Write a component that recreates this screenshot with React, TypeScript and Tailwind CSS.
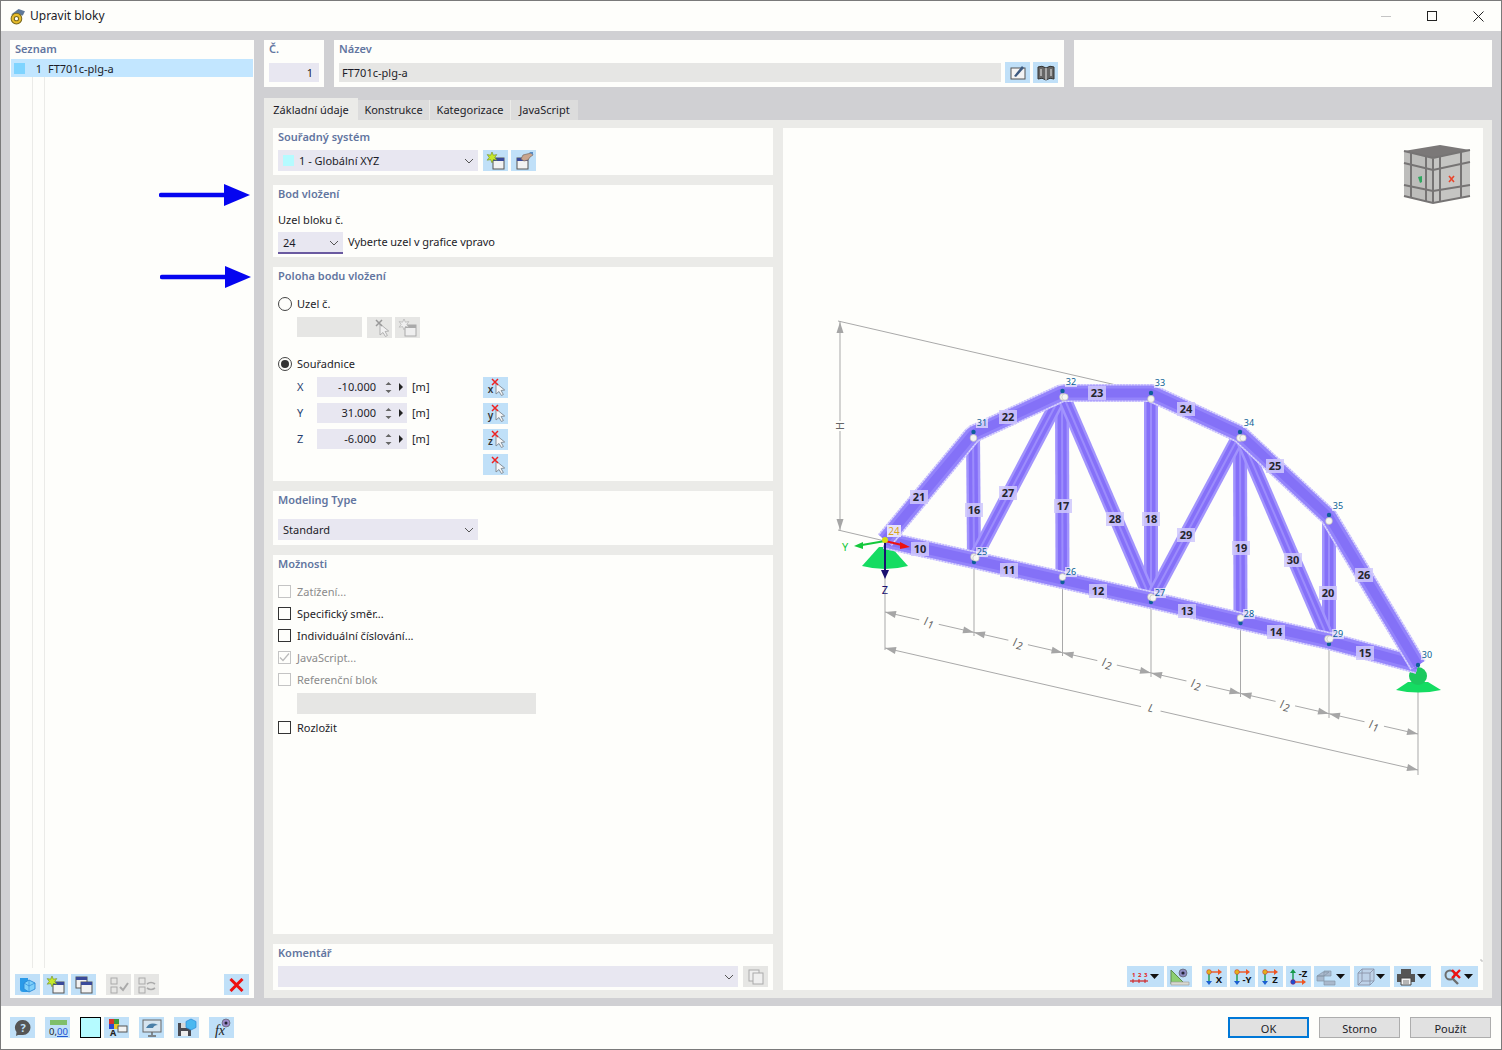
import React from "react";

const FONT = "font-['Noto_Sans','Open_Sans',sans-serif]";

function Sec({ title, className, children }: { title: string; className: string; children?: React.ReactNode }) {
  return (
    <div className={`bg-[#fefefb] pl-[5px] flex flex-col ${className}`}>
      <div className="h-[19px] leading-[17px] text-[#6275a0] font-semibold">{title}</div>
      {children}
    </div>
  );
}

function Btn({ children, off, className = "" }: { children?: React.ReactNode; off?: boolean; className?: string }) {
  return (
    <div className={`w-[25px] h-[21px] shrink-0 flex items-center justify-center ${off ? "bg-[#e6e6e4]" : "bg-[#c0e0f8]"} ${className}`}>
      {children}
    </div>
  );
}

function Ic({ children, w = 22, h = 20 }: { children: React.ReactNode; w?: number; h?: number }) {
  return (
    <svg width={w} height={h} viewBox={`0 0 ${w} ${h}`}>
      {children}
    </svg>
  );
}

const Win = ({ x = 8, y = 7, off = false }: { x?: number; y?: number; off?: boolean }) => (
  <g>
    <rect x={x} y={y} width="11" height="11" fill={off ? "#efefef" : "#f2f2f2"} stroke={off ? "#aaa" : "#555"} />
    <rect x={x} y={y} width="11" height="3" fill={off ? "#aaa" : "#3a4a9a"} />
  </g>
);

const Star = ({ off = false }: { off?: boolean }) => (
  <path d="M7 1l1.4 3.2 3.4-.6-2 2.8 2 2.8-3.4-.6L7 11.8 5.6 8.6l-3.4.6 2-2.8-2-2.8 3.4.6z" fill={off ? "#efefef" : "#c6e82a"} stroke={off ? "#aaa" : "#6d8a1c"} strokeWidth="0.6" />
);

const NewWin = ({ off }: { off?: boolean }) => (
  <Ic>
    <Win off={off} />
    <Star off={off} />
  </Ic>
);

const HandWin = () => (
  <Ic>
    <Win x={4} y={7} />
    <path d="M8 8l2-4 4-1 5-1 1 2-3 2-2 3-4 1z" fill="#c9a58e" stroke="#7b6a62" strokeWidth="0.7" />
    <path d="M16 1l4 0 0 3z" fill="#5a8ac0" />
  </Ic>
);

const Pick = ({ letter, off }: { letter?: string; off?: boolean }) => (
  <Ic>
    <path d="M11 6l0 11 3-2.5 2.4 4 2-1-2.3-4 3.6-.5z" fill={off ? "#f1f1f1" : "#f4f6f8"} stroke={off ? "#aaa" : "#7d8790"} strokeWidth="0.9" />
    <path d="M7 2l6 6M13 2l-6 6" stroke={off ? "#999" : "#ee2222"} strokeWidth="1.5" />
    {letter && (
      <text x="5.5" y="16" fontSize="10" fontWeight="600" textAnchor="middle" fill="#333">
        {letter}
      </text>
    )}
  </Ic>
);

const Chev = () => (
  <svg width="10" height="6" viewBox="0 0 10 6" className="shrink-0">
    <path d="M1 1l4 4 4-4" fill="none" stroke="#555" strokeWidth="1" />
  </svg>
);

const Drop = () => (
  <svg width="9" height="5" viewBox="0 0 9 5" className="shrink-0">
    <path d="M0 0h9L4.5 5z" fill="#111" />
  </svg>
);

function Check({ label, on, off }: { label: string; on?: boolean; off?: boolean }) {
  return (
    <div className={`h-[22px] flex items-center gap-[6px] ${off ? "text-[#8b8b8b]" : ""}`}>
      <div className={`w-[13px] h-[13px] bg-[#fefefb] border flex items-center justify-center ${off ? "border-[#c4c4c4]" : "border-[#333]"}`}>
        {on && (
          <svg width="11" height="11" viewBox="0 0 11 11">
            <path d="M1 5.5l3 3 6-7" fill="none" stroke="#bbb" strokeWidth="1.2" />
          </svg>
        )}
      </div>
      <span>{label}</span>
    </div>
  );
}

function Radio({ label, on }: { label: string; on?: boolean }) {
  return (
    <div className="h-[20px] flex items-center gap-[5px]">
      <div className="w-[14px] h-[14px] rounded-full border border-[#444] flex items-center justify-center">
        {on && <div className="w-[8px] h-[8px] rounded-full bg-[#333]" />}
      </div>
      <span className="pb-[2px]">{label}</span>
    </div>
  );
}

function CoordRow({ axis, value, letter }: { axis: string; value: string; letter: string }) {
  return (
    <div className="h-[26px] flex items-center">
      <span className="w-[39px] pl-[19px] pb-[2px] text-[#27406f]">{axis}</span>
      <div className="w-[90px] h-[20px] bg-[#e8e7f1] flex items-center justify-end pr-[4px]">
        <span className="mr-[9px] pb-[1px]">{value}</span>
        <svg width="7" height="13" viewBox="0 0 7 13" className="mr-[7px]">
          <path d="M3.5 1l3 3H.5zM3.5 12l3-3H.5z" fill="#666" />
        </svg>
        <svg width="4" height="8" viewBox="0 0 4 8">
          <path d="M0 0l4 4-4 4z" fill="#222" />
        </svg>
      </div>
      <span className="w-[76px] pl-[5px] pb-[2px]">[m]</span>
      <Btn>
        <Pick letter={letter} />
      </Btn>
    </div>
  );
}

const bottomChord = "885,540 974,560 1062.5,580 1151,600 1240.5,621 1329,641 1418,665";
const topChord = "885,540 973,434 1062,393 1151,393 1240,434 1329,517 1418,665";

const n = {
  n25: [974, 560], n26: [1062.5, 580], n27: [1151, 600], n28: [1240.5, 621], n29: [1329, 641],
  t31: [973, 434], t32: [1062, 393], t33: [1151, 393], t34: [1240, 434], t35: [1329, 517],
};

const webs: number[][][] = [
  [n.t31, n.n25], [n.t32, n.n26], [n.t33, n.n27], [n.t34, n.n28], [n.t35, n.n29],
  [n.n25, n.t32], [n.t32, n.n27], [n.n27, n.t34], [n.t34, n.n29],
];

const memberLabels: [string, number, number][] = [
  ["21", 919, 497], ["22", 1008, 417], ["23", 1097, 393], ["24", 1186, 409], ["25", 1275, 466], ["26", 1364, 575],
  ["27", 1008, 493], ["28", 1115, 519], ["29", 1186, 535], ["30", 1293, 560],
  ["16", 974, 510], ["17", 1063, 506], ["18", 1151, 519], ["19", 1241, 548], ["20", 1328, 593],
  ["10", 920, 549], ["11", 1009, 570], ["12", 1098, 591], ["13", 1187, 611], ["14", 1276, 632], ["15", 1365, 653],
];

const nodeLabels: [string, number, number][] = [
  ["25", 982, 552], ["26", 1071, 572], ["27", 1160, 593], ["28", 1249, 614], ["29", 1338, 634], ["30", 1427, 655],
  ["31", 982, 423], ["32", 1071, 382], ["33", 1160, 383], ["34", 1249, 423], ["35", 1338, 506],
];

const balls: [number, number, number, number][] = [
  [974, 557, 974, 562], [1062.5, 577, 1062.5, 582], [1151, 597, 1151, 602], [1240.5, 618, 1240.5, 623], [1328, 639, 1329, 644],
  [973.5, 438, 973.5, 432], [1063, 397, 1062.5, 391], [1151, 399, 1151, 393], [1240, 438, 1240, 432], [1329, 521, 1329, 515],
];

const extraBalls: [number, number][] = [[976, 558], [1065, 397], [1153, 598], [1243, 438], [1330, 639]];

const dims: [string, number, number][] = [
  ["L", 1151, 708], ["l1", 929, 622], ["l2", 1018, 643], ["l2", 1107, 663], ["l2", 1196, 684], ["l2", 1285, 705], ["l1", 1374, 725],
];

const dimTicks = [885, 974, 1062.5, 1151, 1240.5, 1329, 1418];

function Arrow({ x, y, a }: { x: number; y: number; a: number }) {
  return <path d="M0 0l-11 -3.5v7z" fill="#a6a6a6" transform={`translate(${x} ${y}) rotate(${a})`} />;
}

function Truss() {
  const grey = "#a9a9a9";
  return (
    <svg className="w-full h-full block" viewBox="783 128 700 862">
      {/* reference and dimension lines */}
      <g stroke={grey} fill="none" strokeWidth="1">
        <path d="M838 321L1151 393M838 530L885 541M840 321V531" />
        <path d="M885 541V650M974 562V636M1062.5 582V656M1151 602V677M1240.5 623V697M1329 644V718M1418 665V775" />
        <path d="M885 612L1418 734M885 648L1418 770" />
      </g>
      <Arrow x={840} y={322} a={-90} />
      <Arrow x={840} y={530} a={90} />
      <rect x="832" y="421" width="16" height="10" fill="#fefefb" />
      <text fontSize="11" textAnchor="middle" fill="#666" transform="translate(844 426) rotate(-90)">H</text>
      {dimTicks.slice(0, 6).map((x, i) => (
        <g key={x}>
          <Arrow x={x} y={612 + (x - 885) * 0.229} a={193} />
          <Arrow x={dimTicks[i + 1]} y={612 + (dimTicks[i + 1] - 885) * 0.229} a={13} />
        </g>
      ))}
      <Arrow x={885} y={648} a={193} />
      <Arrow x={1418} y={770} a={13} />
      {dims.map(([t, x, y], i) => (
        <g key={i} transform={`translate(${x} ${y}) rotate(13)`}>
          <rect x="-10" y="-6" width="20" height="12" fill="#fefefb" />
          <text y="4" fontSize="11" textAnchor="middle" fontStyle="italic" fill="#666">
            {t[0]}
            {t[1] && <tspan fontSize="10.5" dx="1" dy="2">{t[1]}</tspan>}
          </text>
        </g>
      ))}

      {/* supports behind the members */}
      <path d="M862 566L879 547H891L908 566Q885 572 862 566z" fill="#15dc62" />
      <path d="M1396 690L1408 682H1428L1441 690Q1418 695 1396 690z" fill="#15dc62" />
      <circle cx="1418" cy="676" r="9" fill="#1cc95e" />

      {/* members */}
      {webs.map(([a, b], i) => (
        <g key={i}>
          <line x1={a[0]} y1={a[1]} x2={b[0]} y2={b[1]} stroke="#a294fd" strokeWidth="14" />
          <line x1={a[0]} y1={a[1]} x2={b[0]} y2={b[1]} stroke="#8570f8" strokeWidth="9" />
          <line x1={a[0]} y1={a[1]} x2={b[0]} y2={b[1]} stroke="#9c8cfc" strokeWidth="2" />
        </g>
      ))}
      {[bottomChord, topChord].map((pts) => (
        <g key={pts} fill="none" strokeLinejoin="bevel">
          <polyline points={pts} stroke="#dcd7fe" strokeWidth="18" />
          <polyline points={pts} stroke="#c1b8fd" strokeWidth="18" strokeDasharray="1.5 1.5" />
          <polyline points={pts} stroke="#9484fb" strokeWidth="15" />
          <polyline points={pts} stroke="#8471f7" strokeWidth="9" />
        </g>
      ))}

      {memberLabels.map(([t, x, y]) => (
        <g key={t}>
          <rect x={x - 9} y={y - 7} width="18" height="14" fill="#cfc8fb" opacity="0.85" />
          <text x={x} y={y + 4} fontSize="11" fontWeight="700" textAnchor="middle" fill="#26262e">{t}</text>
        </g>
      ))}

      {balls.map(([x, y, dx, dy], i) => (
        <g key={i}>
          <circle cx={dx} cy={dy} r="2.2" fill="#0f5f9a" />
          <circle cx={x} cy={y} r="3.4" fill="#f5f5f2" stroke="#b9b9b0" strokeWidth="0.6" />
        </g>
      ))}
      {extraBalls.map(([x, y]) => (
        <circle key={x} cx={x} cy={y} r="3.2" fill="#f5f5f2" stroke="#b9b9b0" strokeWidth="0.6" />
      ))}
      <circle cx="1418" cy="665" r="2.2" fill="#0f5f9a" />

      {nodeLabels.map(([t, x, y]) => (
        <g key={t + x}>
          <rect x={x - 6} y={y - 5} width="12" height="10" fill="#fefefb" opacity="0.6" />
          <text x={x} y={y + 3} fontSize="9" textAnchor="middle" fill="#0a5e96">{t}</text>
        </g>
      ))}
      <rect x="887" y="525" width="14" height="12" fill="#e6e2fc" />
      <text x="894" y="535" fontSize="10" textAnchor="middle" fill="#d9a520">24</text>

      {/* axes */}
      <path d="M885 541L862 545" stroke="#14c83c" strokeWidth="2" />
      <path d="M854 546l9-4v7z" fill="#14c83c" />
      <path d="M885 541L902 545" stroke="#ee1111" strokeWidth="2" />
      <path d="M910 547l-10-5v7z" fill="#ee1111" />
      <path d="M885 541V572" stroke="#1a1070" strokeWidth="2" />
      <path d="M885 579l-4-9h8z" fill="#1a1070" />
      <circle cx="885" cy="540" r="3" fill="#d6dc10" />
      <text x="845" y="551" fontSize="11" textAnchor="middle" fill="#14c83c">Y</text>
      <text x="885" y="594" fontSize="11" textAnchor="middle" fill="#1a1070">Z</text>

      {/* view cube */}
      <g>
        <path d="M1404 151L1440 145L1470 150L1433 158z" fill="#7b7878" />
        <path d="M1404 151L1433 158V203L1404 196z" fill="#bdbdbb" />
        <path d="M1433 158L1470 150V196L1433 203z" fill="#c5c5c3" />
        <g stroke="#767474" strokeWidth="2" fill="none">
          <path d="M1404 151L1433 158L1470 150M1433 158V203M1404 196L1433 203L1470 196" />
          <path d="M1404 163L1433 170L1470 162M1404 185L1433 191L1470 185" />
          <path d="M1411 153V198M1426 156V201M1440 157V202M1461 152V198" />
        </g>
        <path d="M1418 177l4-1v6l-2 1z" fill="#2ea860" />
        <path d="M1449 176l5 6m0-6l-5 6" stroke="#e8452c" strokeWidth="1.6" />
      </g>

      {/* corner mark */}
      <path d="M1483 961h-2v-2" stroke="#bbb" fill="none" />
    </svg>
  );
}

function ToolBtn({ w = 25, drop, children }: { w?: number; drop?: boolean; children: React.ReactNode }) {
  return (
    <div style={{ width: w }} className="h-[21px] bg-[#c0e0f8] flex items-center justify-between px-[2px] shrink-0">
      {children}
      {drop && <span className="mr-[3px]"><Drop /></span>}
    </div>
  );
}

function AxisIc({ label, up }: { label: string; up?: boolean }) {
  return (
    <Ic w={21} h={18}>
      <path d={up ? "M5 14V4" : "M5 4V14"} stroke="#16994a" strokeWidth="1.4" />
      <path d={up ? "M5 1l3 4H2z" : "M5 17l3-4H2z"} fill={up ? "#16994a" : "#1a5fd0"} />
      <path d={up ? "M5 14H14" : "M5 4H14"} stroke="#ee5522" strokeWidth="1.4" />
      <path d={up ? "M18 14l-4-3v6z" : "M18 4l-4-3v6z"} fill="#ee5522" />
      <circle cx="5" cy={up ? 14 : 4} r="2.4" fill={up ? "#1a4fd0" : "#e2b21a"} stroke="#c03" strokeWidth="0.4" />
      <text x="15" y={up ? 9 : 15} fontSize="9.5" fontWeight="700" textAnchor="middle" fill="#111">{label}</text>
    </Ic>
  );
}

function Toolbar() {
  return (
    <div className="absolute right-[5px] bottom-[3px] flex items-center">
      <ToolBtn w={37} drop>
        <Ic w={20} h={18}>
          <text x="3" y="9" fontSize="6" fill="#e02020" fontWeight="700">1</text>
          <text x="9" y="9" fontSize="6" fill="#e02020" fontWeight="700">2</text>
          <text x="15" y="9" fontSize="6" fill="#e02020" fontWeight="700">3</text>
          <path d="M1 13H19" stroke="#d02020" strokeWidth="1.2" />
          <path d="M4 11v4M10 11v4M16 11v4" stroke="#d02020" />
        </Ic>
      </ToolBtn>
      <div className="w-[3px]" />
      <ToolBtn>
        <Ic w={21} h={18}>
          <path d="M2 2V16H16z" fill="#8ccf70" stroke="#5d8a50" />
          <path d="M2 14H20V17H2z" fill="#d9d9cf" stroke="#999" strokeWidth="0.6" />
          <circle cx="14" cy="5" r="4" fill="#8a8ac0" stroke="#555" strokeWidth="0.6" />
          <circle cx="14" cy="5" r="1.6" fill="#223" />
        </Ic>
      </ToolBtn>
      <div className="w-[10px]" />
      <ToolBtn><AxisIc label="X" /></ToolBtn>
      <div className="w-[3px]" />
      <ToolBtn><AxisIc label="-Y" /></ToolBtn>
      <div className="w-[3px]" />
      <ToolBtn><AxisIc label="Z" /></ToolBtn>
      <div className="w-[3px]" />
      <ToolBtn><AxisIc label="-Z" up /></ToolBtn>
      <div className="w-[3px]" />
      <ToolBtn w={36} drop>
        <Ic w={20} h={18}>
          <path d="M1 8L7 4H13L8 8zM1 8H8V13H1zM8 13H19V17H8zM8 3H15V8H8z" fill="#a9b9cc" stroke="#8595a8" strokeWidth="0.7" />
        </Ic>
      </ToolBtn>
      <div className="w-[4px]" />
      <ToolBtn w={36} drop>
        <Ic w={20} h={18}>
          <path d="M2 5H14V17H2zM6 1H18V13H6zM2 5L6 1M14 5L18 1M14 17L18 13M2 17L6 13" fill="#bcc4d8" fillOpacity="0.5" stroke="#8a93a8" strokeWidth="0.9" />
        </Ic>
      </ToolBtn>
      <div className="w-[4px]" />
      <ToolBtn w={37} drop>
        <Ic w={20} h={18}>
          <path d="M5 1H15V6H5z" fill="#555" />
          <path d="M1 6H19V14H1z" fill="#555" />
          <path d="M5 10H15V17H5z" fill="#f4f4f4" stroke="#444" />
          <path d="M7 13H13M7 15H13" stroke="#777" />
        </Ic>
      </ToolBtn>
      <div className="w-[10px]" />
      <ToolBtn w={37} drop>
        <Ic w={20} h={18}>
          <circle cx="7" cy="7" r="4.5" fill="none" stroke="#6d6d6d" strokeWidth="2" />
          <path d="M10 11l5 5" stroke="#6d6d6d" strokeWidth="2.4" />
          <path d="M9 2l8 8M17 2l-8 8" stroke="#ee1111" strokeWidth="2.4" />
        </Ic>
      </ToolBtn>
    </div>
  );
}

function Shield() {
  return (
    <Ic w={18} h={18}>
      <path d="M1 2H9V16H4Q1 16 1 13z" fill="#2a9ae8" />
      <path d="M10 4L16 7V13L10 16L5 13V7z" fill="#7ed0fa" stroke="#2a8ad8" strokeWidth="0.9" />
      <path d="M10 4V10M5 7L10 10L16 7M10 10V16" stroke="#2a8ad8" strokeWidth="0.7" fill="none" />
    </Ic>
  );
}

function BlueArrow({ top, left }: { top: number; left: number }) {
  return (
    <svg style={{ top, left }} className="absolute" width="92" height="24" viewBox="0 0 92 24">
      <path d="M2 12H66" stroke="#0505f0" strokeWidth="4.5" strokeLinecap="round" />
      <path d="M65 1L91 12L65 23z" fill="#0505f0" />
    </svg>
  );
}

function BottomBtn({ label, primary }: { label: string; primary?: boolean }) {
  return (
    <div className={`w-[81px] h-[21px] bg-[#e1e1e1] flex items-center justify-center ${primary ? "border-2 border-[#0078d7]" : "border border-[#adadad]"}`}>
      <span className="pt-[1px]">{label}</span>
    </div>
  );
}

export default function App() {
  return (
    <div className={`relative w-[1502px] h-[1050px] flex flex-col overflow-hidden border-t border-l border-r border-b border-[#7a7a7a] bg-[#d0d0d3] text-[11px] leading-none text-[#1c1c28] ${FONT}`}>
      {/* title bar */}
      <div className="h-[30px] shrink-0 bg-[#fefefb] flex items-center pl-[8px]">
        <svg width="17" height="17" viewBox="0 0 16 16">
          <path d="M2 6L9 1L15 3L13 7z" fill="#5f7898" />
          <circle cx="7" cy="10" r="5" fill="#e8bc2a" stroke="#7a6a20" />
          <circle cx="7" cy="10" r="2" fill="#fefefb" stroke="#7a6a20" />
        </svg>
        <span className="ml-[4px] text-[12px]">Upravit bloky</span>
        <div className="ml-auto flex items-center">
          <div className="w-[46px] flex justify-center">
            <div className="w-[10px] h-px bg-[#c4c4c4]" />
          </div>
          <div className="w-[46px] flex justify-center">
            <div className="w-[10px] h-[10px] border border-[#222]" />
          </div>
          <div className="w-[46px] flex justify-center">
            <svg width="11" height="11" viewBox="0 0 11 11">
              <path d="M.5.5l10 10M10.5.5l-10 10" stroke="#222" />
            </svg>
          </div>
        </div>
      </div>

      {/* body */}
      <div className="flex-1 min-h-0 flex gap-[10px] pt-[9px] pb-[8px] pl-[9px] pr-[9px]">
        {/* list */}
        <div className="w-[244px] bg-[#fefefb] flex flex-col shrink-0">
          <div className="h-[19px] leading-[17px] pl-[5px] text-[#6275a0] font-semibold">Seznam</div>
          <div className="relative flex-1 min-h-0 mx-px">
            <div className="absolute left-[21px] top-0 bottom-[5px] w-px bg-[#ebebe8]" />
            <div className="absolute left-[33px] top-0 bottom-[5px] w-px bg-[#ebebe8]" />
            <div className="relative h-[18px] bg-[#c2e6ff] flex items-center">
              <div className="ml-[3px] w-[11px] h-[11px] bg-[#7fd4ff]" />
              <span className="w-[17px] text-right">1</span>
              <span className="ml-[6px]">FT701c-plg-a</span>
            </div>
          </div>
          <div className="h-[22px] mb-[3px] flex items-end pl-[5px] pr-[5px] gap-[3px]">
            <Btn><Shield /></Btn>
            <Btn><NewWin /></Btn>
            <Btn>
              <Ic>
                <Win x={3} y={2} />
                <Win x={8} y={7} />
              </Ic>
            </Btn>
            <Btn off className="ml-[7px]">
              <Ic>
                <rect x="3" y="3" width="6" height="6" fill="none" stroke="#aaa" />
                <rect x="3" y="12" width="6" height="6" fill="none" stroke="#aaa" />
                <path d="M12 12l3 3 5-7" fill="none" stroke="#aaa" strokeWidth="2" />
              </Ic>
            </Btn>
            <Btn off>
              <Ic>
                <rect x="3" y="3" width="6" height="6" fill="none" stroke="#aaa" />
                <rect x="3" y="12" width="6" height="6" fill="none" stroke="#aaa" />
                <path d="M11 9q4-3 8 0M19 13q-4 3-8 0" fill="none" stroke="#aaa" strokeWidth="1.6" />
              </Ic>
            </Btn>
            <Btn className="ml-auto">
              <svg width="15" height="14" viewBox="0 0 15 14">
                <path d="M1.5 1l12 12M13.5 1l-12 12" stroke="#ee1111" strokeWidth="3" />
              </svg>
            </Btn>
          </div>
        </div>

        {/* main */}
        <div className="flex-1 min-w-0 flex flex-col">
          <div className="h-[47px] flex gap-[10px] shrink-0">
            <div className="w-[60px] bg-[#fefefb] px-[5px] flex flex-col">
              <div className="h-[19px] leading-[17px] text-[#6275a0] font-semibold">Č.</div>
              <div className="mt-[4px] h-[19px] bg-[#e8e7f1] flex items-center justify-end pr-[6px]">1</div>
            </div>
            <div className="w-[730px] bg-[#fefefb] px-[5px] flex flex-col">
              <div className="h-[19px] leading-[17px] text-[#6275a0] font-semibold">Název</div>
              <div className="mt-[4px] flex gap-[4px]">
                <div className="w-[662px] h-[19px] bg-[#e6e6e4] flex items-center pl-[3px]">FT701c-plg-a</div>
                <Btn className="-mt-[1px]">
                  <Ic>
                    <rect x="4" y="5" width="14" height="11" fill="#f4f4f4" stroke="#555" />
                    <path d="M7 13L15 3l2 2-8 9z" fill="#3d5a80" />
                  </Ic>
                </Btn>
                <Btn className="-ml-[1px] -mt-[1px]">
                  <Ic>
                    <path d="M3 4Q7 2 11 5Q15 2 19 4V16Q15 14 11 17Q7 14 3 16z" fill="#666" stroke="#333" />
                    <path d="M11 5V17M6 6v7M16 6v7" stroke="#eee" />
                  </Ic>
                </Btn>
              </div>
            </div>
            <div className="flex-1 bg-[#fefefb]" />
          </div>

          {/* tabs */}
          <div className="h-[22px] mt-[11px] flex items-end shrink-0">
            <div className="w-[94px] h-[22px] bg-[#ebebe8] flex items-center justify-center">Základní údaje</div>
            <div className="w-[72px] h-[20px] bg-[#dcdcdc] border-r border-[#ebebe8] flex items-center justify-center pb-[2px]">Konstrukce</div>
            <div className="w-[81px] h-[20px] bg-[#dcdcdc] border-r border-[#ebebe8] flex items-center justify-center pb-[2px]">Kategorizace</div>
            <div className="w-[67px] h-[20px] bg-[#dcdcdc] flex items-center justify-center pb-[2px]">JavaScript</div>
          </div>

          <div className="flex-1 min-h-0 bg-[#ebebe8] flex gap-[10px] pt-[8px] pb-[8px] pl-[9px] pr-[9px]">
            <div className="w-[500px] shrink-0 flex flex-col gap-[10px]">
              <Sec title="Souřadný systém" className="h-[47px]">
                <div className="mt-[3px] flex items-center">
                  <div className="w-[200px] h-[21px] bg-[#e8e7f1] flex items-center pl-[5px] pr-[4px]">
                    <div className="w-[11px] h-[11px] bg-[#b5fbff]" />
                    <span className="ml-[5px]">1 - Globální XYZ</span>
                    <span className="ml-auto"><Chev /></span>
                  </div>
                  <Btn className="ml-[5px]"><NewWin /></Btn>
                  <Btn className="ml-[3px]"><HandWin /></Btn>
                </div>
              </Sec>

              <Sec title="Bod vložení" className="h-[72px]">
                <div className="mt-[7px] h-[18px] leading-[18px]">Uzel bloku č.</div>
                <div className="mt-[3px] flex items-center">
                  <div className="w-[65px] h-[22px] bg-[#e8e7f1] border-b-2 border-[#6a5aa0] flex items-center pl-[5px] pr-[4px] pt-[1px]">
                    <span>24</span>
                    <span className="ml-auto"><Chev /></span>
                  </div>
                  <span className="ml-[5px] pb-[3px] tracking-[-0.05px]">Vyberte uzel v grafice vpravo</span>
                </div>
              </Sec>

              <Sec title="Poloha bodu vložení" className="h-[214px]">
                <div className="mt-[8px]"><Radio label="Uzel č." /></div>
                <div className="mt-[3px] flex pl-[19px] gap-[5px]">
                  <div className="w-[65px] h-[20px] bg-[#e6e6e4]" />
                  <Btn off><Pick off /></Btn>
                  <Btn off className="-ml-[2px]"><NewWin off /></Btn>
                </div>
                <div className="mt-[16px]"><Radio label="Souřadnice" on /></div>
                <div className="flex flex-col">
                  <CoordRow axis="X" value="-10.000" letter="x" />
                  <CoordRow axis="Y" value="31.000" letter="y" />
                  <CoordRow axis="Z" value="-6.000" letter="z" />
                  <Btn className="ml-[205px] mt-[2px]"><Pick /></Btn>
                </div>
              </Sec>

              <Sec title="Modeling Type" className="h-[54px]">
                <div className="mt-[9px] w-[200px] h-[21px] bg-[#e8e7f1] flex items-center pl-[5px] pr-[4px]">
                  <span>Standard</span>
                  <span className="ml-auto"><Chev /></span>
                </div>
              </Sec>

              <Sec title="Možnosti" className="flex-1 min-h-0">
                <div className="mt-[6px] flex flex-col">
                  <Check label="Zatížení..." off />
                  <Check label="Specifický směr..." />
                  <Check label="Individuální číslování..." />
                  <Check label="JavaScript..." on off />
                  <Check label="Referenční blok" off />
                  <div className="ml-[19px] mt-[3px] w-[239px] h-[21px] bg-[#e6e6e4]" />
                  <div className="mt-[2px]"><Check label="Rozložit" /></div>
                </div>
              </Sec>

              <Sec title="Komentář" className="h-[46px]">
                <div className="mt-[3px] flex items-center pr-[5px] gap-[5px]">
                  <div className="flex-1 h-[21px] bg-[#e8e7f1] flex items-center justify-end pr-[4px]"><Chev /></div>
                  <Btn off>
                    <Ic>
                      <rect x="4" y="3" width="10" height="11" fill="#efefef" stroke="#aaa" />
                      <rect x="8" y="6" width="10" height="11" fill="#efefef" stroke="#aaa" />
                    </Ic>
                  </Btn>
                </div>
              </Sec>
            </div>

            <div className="relative flex-1 min-w-0 bg-[#fefefb]">
              <Truss />
              <Toolbar />
            </div>
          </div>
        </div>
      </div>

      {/* bottom bar */}
      <div className="h-[43px] shrink-0 bg-[#fefefb] flex items-center pl-[9px] pr-[10px]">
        <Btn>
          <svg width="18" height="18" viewBox="0 0 18 18">
            <path d="M9 1a7.5 7.5 0 0 1 0 15H4L2 17l.5-4A7.5 7.5 0 0 1 9 1z" fill="#555" />
            <text x="9" y="13" fontSize="11" fontWeight="700" textAnchor="middle" fill="#c0e0f8">?</text>
          </svg>
        </Btn>
        <Btn className="ml-[10px]">
          <Ic w={22} h={18}>
            <rect x="3" y="1" width="17" height="5" fill="#7fbf6a" />
            <text x="2" y="16" fontSize="9.5" fill="#222">0,</text>
            <text x="10" y="16" fontSize="9.5" fill="#1a4fd0" textDecoration="underline">00</text>
          </Ic>
        </Btn>
        <div className="ml-[10px] w-[21px] h-[21px] bg-[#b5fbff] border border-black" />
        <Btn className="ml-[3px]">
          <Ic>
            <rect x="3" y="1" width="5" height="5" fill="#d8342c" />
            <rect x="8" y="1" width="5" height="5" fill="#3c9a3c" />
            <rect x="3" y="6" width="5" height="5" fill="#2c4ad0" />
            <rect x="8" y="6" width="5" height="5" fill="#e8c82a" />
            <rect x="12" y="8" width="9" height="6" fill="#f2f2f2" stroke="#555" />
            <text x="7" y="18" fontSize="9" fontWeight="700" textAnchor="middle" fill="#222">A</text>
          </Ic>
        </Btn>
        <Btn className="ml-[10px]">
          <Ic>
            <rect x="2" y="2" width="18" height="12" fill="#d6e4f0" stroke="#666" />
            <path d="M5 10q4-7 12-3-4 0-5 3z" fill="#4a7ea8" />
            <path d="M11 14v3M7 18h8" stroke="#666" strokeWidth="1.4" />
          </Ic>
        </Btn>
        <Btn className="ml-[10px]">
          <Ic>
            <path d="M2 5H13L15 7V18H2z" fill="#4a4a52" />
            <rect x="5" y="5" width="6" height="5" fill="#d8d8d8" />
            <rect x="5" y="13" width="7" height="5" fill="#eee" />
            <path d="M15 1l5 2.5v6L15 12l-5-2.5v-6z" fill="#4ab8f0" stroke="#2a8ad8" strokeWidth="0.7" />
          </Ic>
        </Btn>
        <Btn className="ml-[10px]">
          <Ic>
            <text x="9" y="17" fontSize="14" fontStyle="italic" fontFamily="Liberation Serif, serif" textAnchor="middle" fill="#222">fx</text>
            <circle cx="15" cy="5" r="4" fill="#9a8ac8" stroke="#555" strokeWidth="0.6" />
            <circle cx="15" cy="5" r="1.5" fill="#223" />
          </Ic>
        </Btn>
        <div className="ml-auto flex gap-[10px]">
          <BottomBtn label="OK" primary />
          <BottomBtn label="Storno" />
          <BottomBtn label="Použít" />
        </div>
      </div>

      <BlueArrow top={182} left={158} />
      <BlueArrow top={264} left={159} />
    </div>
  );
}
